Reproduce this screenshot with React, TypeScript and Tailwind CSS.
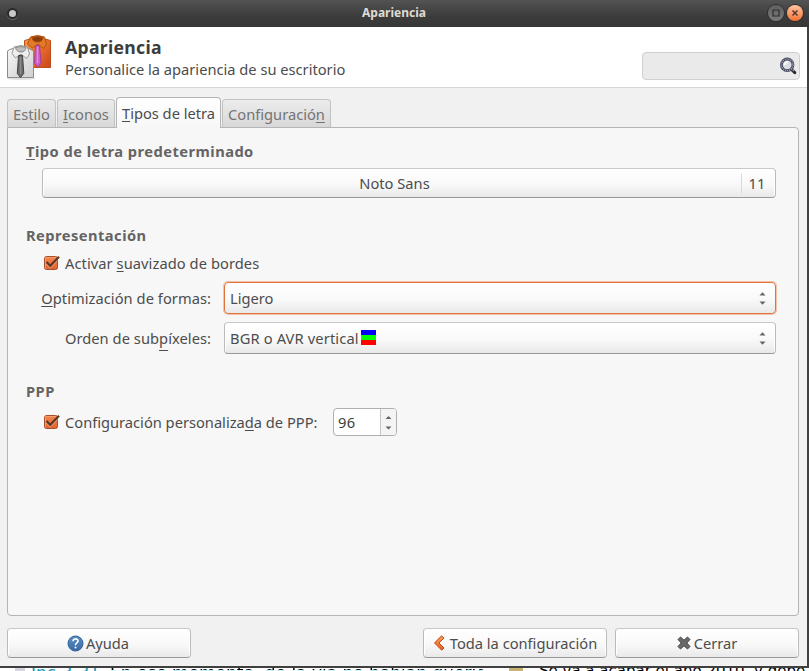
import type { ReactNode } from "react";

const Key = ({ children }: { children: ReactNode }) => (
  <span className="underline decoration-1 underline-offset-2 [text-decoration-skip-ink:none]">{children}</span>
);

function Shirts() {
  return (
    <svg width="48" height="48" viewBox="0 0 48 48" className="block">
      <defs>
        <linearGradient id="orange" x1="0" y1="0" x2="1" y2="1">
          <stop offset="0" stopColor="#f5a04e" />
          <stop offset="0.5" stopColor="#e8702c" />
          <stop offset="1" stopColor="#cc421e" />
        </linearGradient>
        <linearGradient id="white" x1="0" y1="0" x2="1" y2="1">
          <stop offset="0" stopColor="#f6f6f6" />
          <stop offset="1" stopColor="#cfcfcf" />
        </linearGradient>
      </defs>
      <ellipse cx="16" cy="45.5" rx="14.5" ry="1.4" fill="#000" opacity="0.12" />
      <path d="M19.5 7.5L25 6L27 3.5H38L40 6L45.5 7.5V34.5H19.5Z" fill="url(#orange)" stroke="#b9501c" />
      <path d="M25.5 4Q32.5 1 39.5 4L41.5 11L38.5 15.5L33 11L27.5 15L22.5 11Z" fill="#e27a2a" stroke="#b3540f" />
      <path d="M27 4.5Q32.5 2.5 38 4.5Q37.5 9 32.5 9Q27.5 9 27 4.5Z" fill="#8a3d08" stroke="#a84f10" />
      <path d="M30.5 12.5H34.5L36 30.5L32.5 34L29.5 30.5Z" fill="#cb5fc4" stroke="#a33f9c" />
      <path d="M32.5 14V30" stroke="#e08ddb" strokeWidth="1.4" />
      <path d="M2.5 18Q4 16.5 8 15.5H24L28.5 18V44.5H2.5Z" fill="url(#white)" stroke="#8c8c8c" />
      <path d="M9 14Q16 11 22.5 14L24.5 21L21.5 25.5L16 21L10.5 25L7 20.5Z" fill="#eeeeee" stroke="#999" />
      <path d="M10.5 14.5Q16 12.5 21 14.5Q20.5 19 16 19Q11.5 19 10.5 14.5Z" fill="#bdbdbd" stroke="#8a8a8a" />
      <path d="M13.5 22.5H17.5L18.8 40.5L15.5 44.5L12.3 40.5Z" fill="#6a6c69" stroke="#434643" />
      <path d="M15.5 24V41" stroke="#8b8e8a" strokeWidth="1.4" />
    </svg>
  );
}

const Search = () => (
  <svg width="18" height="18" viewBox="0 0 18 18">
    <path d="M12.5 12.5L15.8 15.6" stroke="#2a2a2a" strokeWidth="3" strokeLinecap="round" />
    <path d="M12.5 12L15 14.2" stroke="#b5b5a8" strokeWidth="1" />
    <circle cx="8.2" cy="7.8" r="5.8" fill="#dcdde0" stroke="#42465c" strokeWidth="2.8" />
    <circle cx="8.2" cy="7.8" r="5.8" fill="none" stroke="#a3a7ba" strokeWidth="1.6" strokeDasharray="1 1" />
    <path d="M5.5 8Q6 5 9 5" fill="none" stroke="#fff" strokeWidth="1.5" />
  </svg>
);

const Check = () => (
  <svg width="18" height="18" viewBox="0 0 18 18" className="block shrink-0">
    <defs>
      <linearGradient id="check" x1="0" y1="0" x2="0" y2="1">
        <stop offset="0" stopColor="#f5864f" />
        <stop offset="1" stopColor="#e2622c" />
      </linearGradient>
    </defs>
    <rect x="2.5" y="2.5" width="13" height="13" rx="2" fill="url(#check)" stroke="#a5502b" />
    <path d="M3.5 14.5V3.5H14.5" fill="none" stroke="#f9a27a" opacity="0.7" />
    <path d="M4.5 8L8 11.7L16.7 2.6" fill="none" stroke="#fff" strokeOpacity="0.35" strokeWidth="2.4" transform="translate(0 1.2)" />
    <path d="M4.5 8L8.2 11.8L17 2.8" fill="none" stroke="#5e3826" strokeWidth="2.2" />
  </svg>
);

const Arrows = () => (
  <svg width="7" height="13" viewBox="0 0 7 13" className="block">
    <path d="M.5 3.5L3.5 .3L6.5 3.5ZM.5 9.5L3.5 12.7L6.5 9.5Z" fill="#666" />
  </svg>
);

const Tab = ({ active, width, children }: { active?: boolean; width: string; children: ReactNode }) => (
  <div
    className={`${width} ${
      active
        ? "relative z-10 -mb-px h-[31px] border-[#b5b5b5] bg-gradient-to-b from-white to-[#f7f7f7] pt-[5px] text-[#4c4c4c]"
        : "h-7 border-[#c2c2c2] bg-gradient-to-b from-[#ececec] to-[#d8d8d8] pt-1 text-[#747474]"
    } flex justify-center rounded-t-[4px] border border-b-0 leading-5`}
  >
    <span>{children}</span>
  </div>
);

const raised =
  "rounded-[4px] border border-[#bbb] border-t-[#c8c8c8] border-b-[#999] bg-gradient-to-b from-white via-[#f9f9f9] via-55% to-[#e9e9e9] shadow-[inset_1px_1px_0_#fff,inset_-1px_0_0_#fff]";

const Button = ({ icon, gap, children }: { icon: ReactNode; gap: string; children: ReactNode }) => (
  <button className={`${raised} ${gap} flex h-[30px] w-[184px] items-center justify-center`}>
    {icon}
    <span className="leading-5">{children}</span>
  </button>
);

const Heading = ({ children, className }: { children: ReactNode; className: string }) => (
  <h2 className={`${className} ml-[18px] h-5 leading-5 font-bold tracking-[0.47px] text-[#646464]`}>{children}</h2>
);

export default function App() {
  return (
    <div className="flex h-[671px] w-[809px] flex-col overflow-hidden bg-white font-['Noto_Sans',sans-serif] text-[14.667px] whitespace-nowrap text-[#4c4c4c]">
      <header className="flex h-[27px] shrink-0 items-center bg-gradient-to-b from-[#535353] via-[#3c3c3c] via-60% to-[#373737]">
        <div className="ml-[7px] flex w-[43px] items-center">
          <span className="flex size-[11px] items-center justify-center rounded-full bg-[#292929] shadow-[0_1px_0_#666]">
            <span className="size-[7px] rounded-full bg-[#c8c8c8]" />
          </span>
        </div>
        <div className="flex-1 pr-[30px] pb-[2px] text-center text-[12px] font-bold text-[#dfdbd2]">Apariencia</div>
        <div className="mr-[6px] mb-[2px] flex gap-[3px]">
          <span className="flex size-4 items-center justify-center rounded-full bg-gradient-to-b from-[#5f5f5f] to-[#7b7b7b] shadow-[0_0_0_1px_#303030]">
            <svg width="8" height="8" viewBox="0 0 8 8"><path d="M1 1H7V7H1Z" fill="none" stroke="#2c2c2c" strokeWidth="1.2" /></svg>
          </span>
          <span className="flex size-4 items-center justify-center rounded-full bg-gradient-to-b from-[#ffc3a1] to-[#f2712f] shadow-[0_0_0_1px_#303030]">
            <svg width="8" height="8" viewBox="0 0 8 8"><path d="M1.5 1.5L6.5 6.5M6.5 1.5L1.5 6.5" stroke="#523a30" strokeWidth="1.5" /></svg>
          </span>
        </div>
      </header>

      <div className="flex min-h-0 flex-1 flex-col border-r-2 border-b-2 border-[#404040] bg-[#f1f1f1]">
        <section className="flex h-[61px] shrink-0 border-b border-[#d6d6d6] bg-white pl-[5px]">
          <div className="mt-[6px] w-12"><Shirts /></div>
          <div className="ml-3 flex-1">
            <h1 className="mt-[9px] h-[23px] text-[17.6px] leading-[23px] font-bold tracking-[0.3px] text-[#3c3c3c]">Apariencia</h1>
            <p className="leading-5">Personalice la apariencia de su escritorio</p>
          </div>
          <div className="mt-[25px] mr-[7px] flex h-7 w-[158px] items-center justify-end rounded-[4px] border border-[#d0d0d0] bg-[#eaeaea] pr-[2px]">
            <Search />
          </div>
        </section>

        <nav className="mt-[9px] ml-[7px] flex h-[30px] shrink-0 items-end gap-px">
          <Tab width="w-[49px]">Est<Key>i</Key>lo</Tab>
          <Tab width="w-[58px]"><Key>I</Key>conos</Tab>
          <Tab active width="w-[105px]"><Key>T</Key>ipos de letra</Tab>
          <Tab width="w-[109px]">Configuració<Key>n</Key></Tab>
        </nav>

        <main className="mx-[7px] mr-2 h-[489px] shrink-0 rounded-[4px] rounded-tl-none border border-[#b5b5b5] bg-[#f7f7f7]">
          <Heading className="mt-[13px]"><Key>T</Key>ipo de letra predeterminado</Heading>
          <button className={`${raised} mt-[7px] ml-[34px] flex h-[30px] w-[734px] items-center`}>
            <span className="flex-1 pl-[5px] text-center leading-5">Noto Sans</span>
            <span className="h-[19px] w-px bg-[#d8d8d8]" />
            <span className="w-[33px] pr-[3px] text-center leading-5">11</span>
          </button>

          <Heading className="mt-[27px]">Representación</Heading>
          <label className="mt-2 ml-[34px] flex h-5 items-center gap-[5px]">
            <Check />
            <span className="leading-5 tracking-[0.07px]">Activar <Key>s</Key>uavizado de bordes</span>
          </label>

          <div className="mt-[9px] ml-[33px] grid w-[735px] grid-cols-[170px_552px] gap-x-[13px] gap-y-2">
            <span className="text-right leading-8 tracking-[0.05px]"><Key>O</Key>ptimización de formas:</span>
            <div className="flex h-8 items-center justify-between rounded-[4px] border border-[#e0743c] bg-gradient-to-b from-white via-[#f9f9f9] via-55% to-[#e9e9e9] pr-[9px] pl-[5px] shadow-[0_0_0_1px_#f3c3a9]">
              <span className="leading-5">Ligero</span>
              <Arrows />
            </div>
            <span className="text-right leading-8 tracking-[0.05px]">Orden de sub<span className="underline decoration-1 underline-offset-[6px] [text-decoration-skip-ink:none]">p</span>íxeles:</span>
            <div className={`${raised} flex h-8 items-center justify-between pr-[9px] pl-[5px]`}>
              <span className="flex items-center gap-[2px] leading-5 tracking-[0.14px]">
                BGR o AVR vertical
                <span className="mb-[2px] flex h-[15px] w-[15px] flex-col">
                  <span className="flex-1 bg-[#00f]" />
                  <span className="flex-1 bg-[#0f0]" />
                  <span className="flex-1 bg-[#f00]" />
                </span>
              </span>
              <Arrows />
            </div>
          </div>

          <Heading className="mt-[27px]">PPP</Heading>
          <div className="mt-[7px] ml-[34px] flex h-7 items-center">
            <Check />
            <span className="ml-[5px] w-[268px] leading-5">Configuración personaliza<Key>d</Key>a de PPP:</span>
            <div className="flex h-7 w-16 overflow-hidden rounded-[4px] border border-[#b0b0b0] bg-white">
              <span className="flex-1 pl-1 leading-[27px] tracking-[0.3px] text-[#3c3c3c]">96</span>
              <span className="flex w-4 items-center justify-center border-l border-[#c4c4c4] bg-[#f4f4f4]">
                <svg width="7" height="15" viewBox="0 0 7 15"><path d="M.5 4L3.5 1L6.5 4ZM.5 11.5L3.5 14.5L6.5 11.5Z" fill="#666" /></svg>
              </span>
            </div>
          </div>
        </main>

        <footer className="mt-3 mr-2 ml-[7px] flex h-[30px] shrink-0 gap-2">
          <Button gap="gap-[2px] pr-[2px]" icon={
            <svg width="17" height="17" viewBox="0 0 17 17">
              <defs><linearGradient id="help" x1="0" y1="0" x2="0" y2="1"><stop offset="0" stopColor="#5d91c5" /><stop offset="1" stopColor="#3769a3" /></linearGradient></defs>
              <circle cx="8.5" cy="8.5" r="7.5" fill="url(#help)" stroke="#2d5f99" />
              <path d="M6 6.2C6 3.2 11 3.2 11 6C11 8 8.5 7.9 8.5 10.2" fill="none" stroke="#fff" strokeWidth="1.6" />
              <circle cx="8.5" cy="12.6" r="1" fill="#fff" />
            </svg>
          }>Ayuda</Button>
          <div className="flex-1" />
          <Button gap="gap-[5px]" icon={
            <svg width="12" height="16" viewBox="0 0 12 16">
              <defs><linearGradient id="back" x1="0" y1="0" x2="0" y2="1"><stop offset="0" stopColor="#f2a45e" /><stop offset="1" stopColor="#ed5a22" /></linearGradient></defs>
              <path d="M8.5 .8L11 3L6 8L11 13L8.7 15.2L1.5 8Z" fill="url(#back)" stroke="#c74918" strokeLinejoin="round" />
            </svg>
          }>Toda la configuración</Button>
          <Button gap="gap-[3px]" icon={
            <svg width="14" height="14" viewBox="0 0 14 14">
              <path d="M3.5 1L7 4.2L10.5 1L13 3.5L9.8 7L13 10.5L10.5 13L7 9.8L3.5 13L1 10.5L4.2 7L1 3.5Z" fill="#686868" stroke="#484848" strokeLinejoin="round" />
            </svg>
          }>Cerrar</Button>
        </footer>
      </div>

      <div className="flex h-[3px] shrink-0 items-start overflow-hidden bg-white font-['DejaVu_Sans',sans-serif] text-[17px] leading-[11px] text-black">
        <span className="ml-[15px] h-[3px] w-[10px] shrink-0 bg-[#d5d5df]" />
        <span className="ml-[6px] w-[79px] shrink-0 text-[#159bb5]">Inc 3-31</span>
        <span className="w-[373px] shrink-0 bg-[linear-gradient(#000_2px,#a5eef5_2px)] bg-clip-text text-transparent">En ese momento, de la vía no habían querido</span>
        <span className="ml-[26px] h-[3px] w-[14px] shrink-0 bg-[#c9b36f]" />
        <span className="ml-[16px] shrink-0 text-[15px] leading-[7px]">Se va a acabar el año 2010, y debe</span>
      </div>
    </div>
  );
}
